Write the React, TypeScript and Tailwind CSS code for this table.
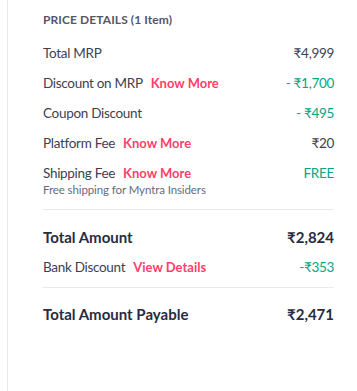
export default function App() {
  const font = { fontFamily: "Lato, 'Noto Sans', sans-serif" };
  const link = "ml-[8px] text-[13px] font-bold tracking-normal text-[#ff3f6c]";
  const row = "flex h-[20px] items-center justify-between leading-[20px]";
  return (
    <div className="h-[391px] w-[357px] bg-white" style={font}>
      <div className="ml-[7px] h-full border-l border-[#eaeaec] pl-[35px] pr-[23px] pt-[12px] text-[13.5px] tracking-[-0.3px] text-[#3e4152]">
        <div className="mb-[15px] h-[16px] text-[12px] font-bold leading-[16px] tracking-[0.1px] text-[#535766]">
          PRICE DETAILS (1 Item)
        </div>

        <div className={`mb-[10px] ${row}`}>
          <span>Total MRP</span>
          <span>₹4,999</span>
        </div>
        <div className={`mb-[10px] ${row}`}>
          <span>
            Discount on MRP<span className={link}>Know More</span>
          </span>
          <span className="text-[#03a685]">- ₹1,700</span>
        </div>
        <div className={`mb-[10px] ${row}`}>
          <span>Coupon Discount</span>
          <span className="text-[#03a685]">- ₹495</span>
        </div>
        <div className={`mb-[10px] ${row}`}>
          <span>
            Platform Fee<span className={link}>Know More</span>
          </span>
          <span>₹20</span>
        </div>
        <div className={row}>
          <span>
            Shipping Fee<span className={link}>Know More</span>
          </span>
          <span className="text-[#03a685]">FREE</span>
        </div>
        <div className="h-[14px] text-[11.5px] leading-[14px] tracking-[-0.1px] text-[#696b79]">
          Free shipping for Myntra Insiders
        </div>

        <div className="mt-[12px] border-t border-[#eaeaec]" />

        <div className={`mt-[17px] mb-[10px] ${row} text-[15px] font-bold tracking-normal text-[#282c3f]`}>
          <span>Total Amount</span>
          <span>₹2,824</span>
        </div>
        <div className={row}>
          <span>
            Bank Discount<span className={link}>View Details</span>
          </span>
          <span className="text-[#03a685]">-₹353</span>
        </div>

        <div className="mt-[10px] border-t border-[#eaeaec]" />

        <div className={`mt-[16px] ${row} text-[15px] font-bold tracking-normal text-[#282c3f]`}>
          <span>Total Amount Payable</span>
          <span>₹2,471</span>
        </div>
      </div>
    </div>
  );
}
